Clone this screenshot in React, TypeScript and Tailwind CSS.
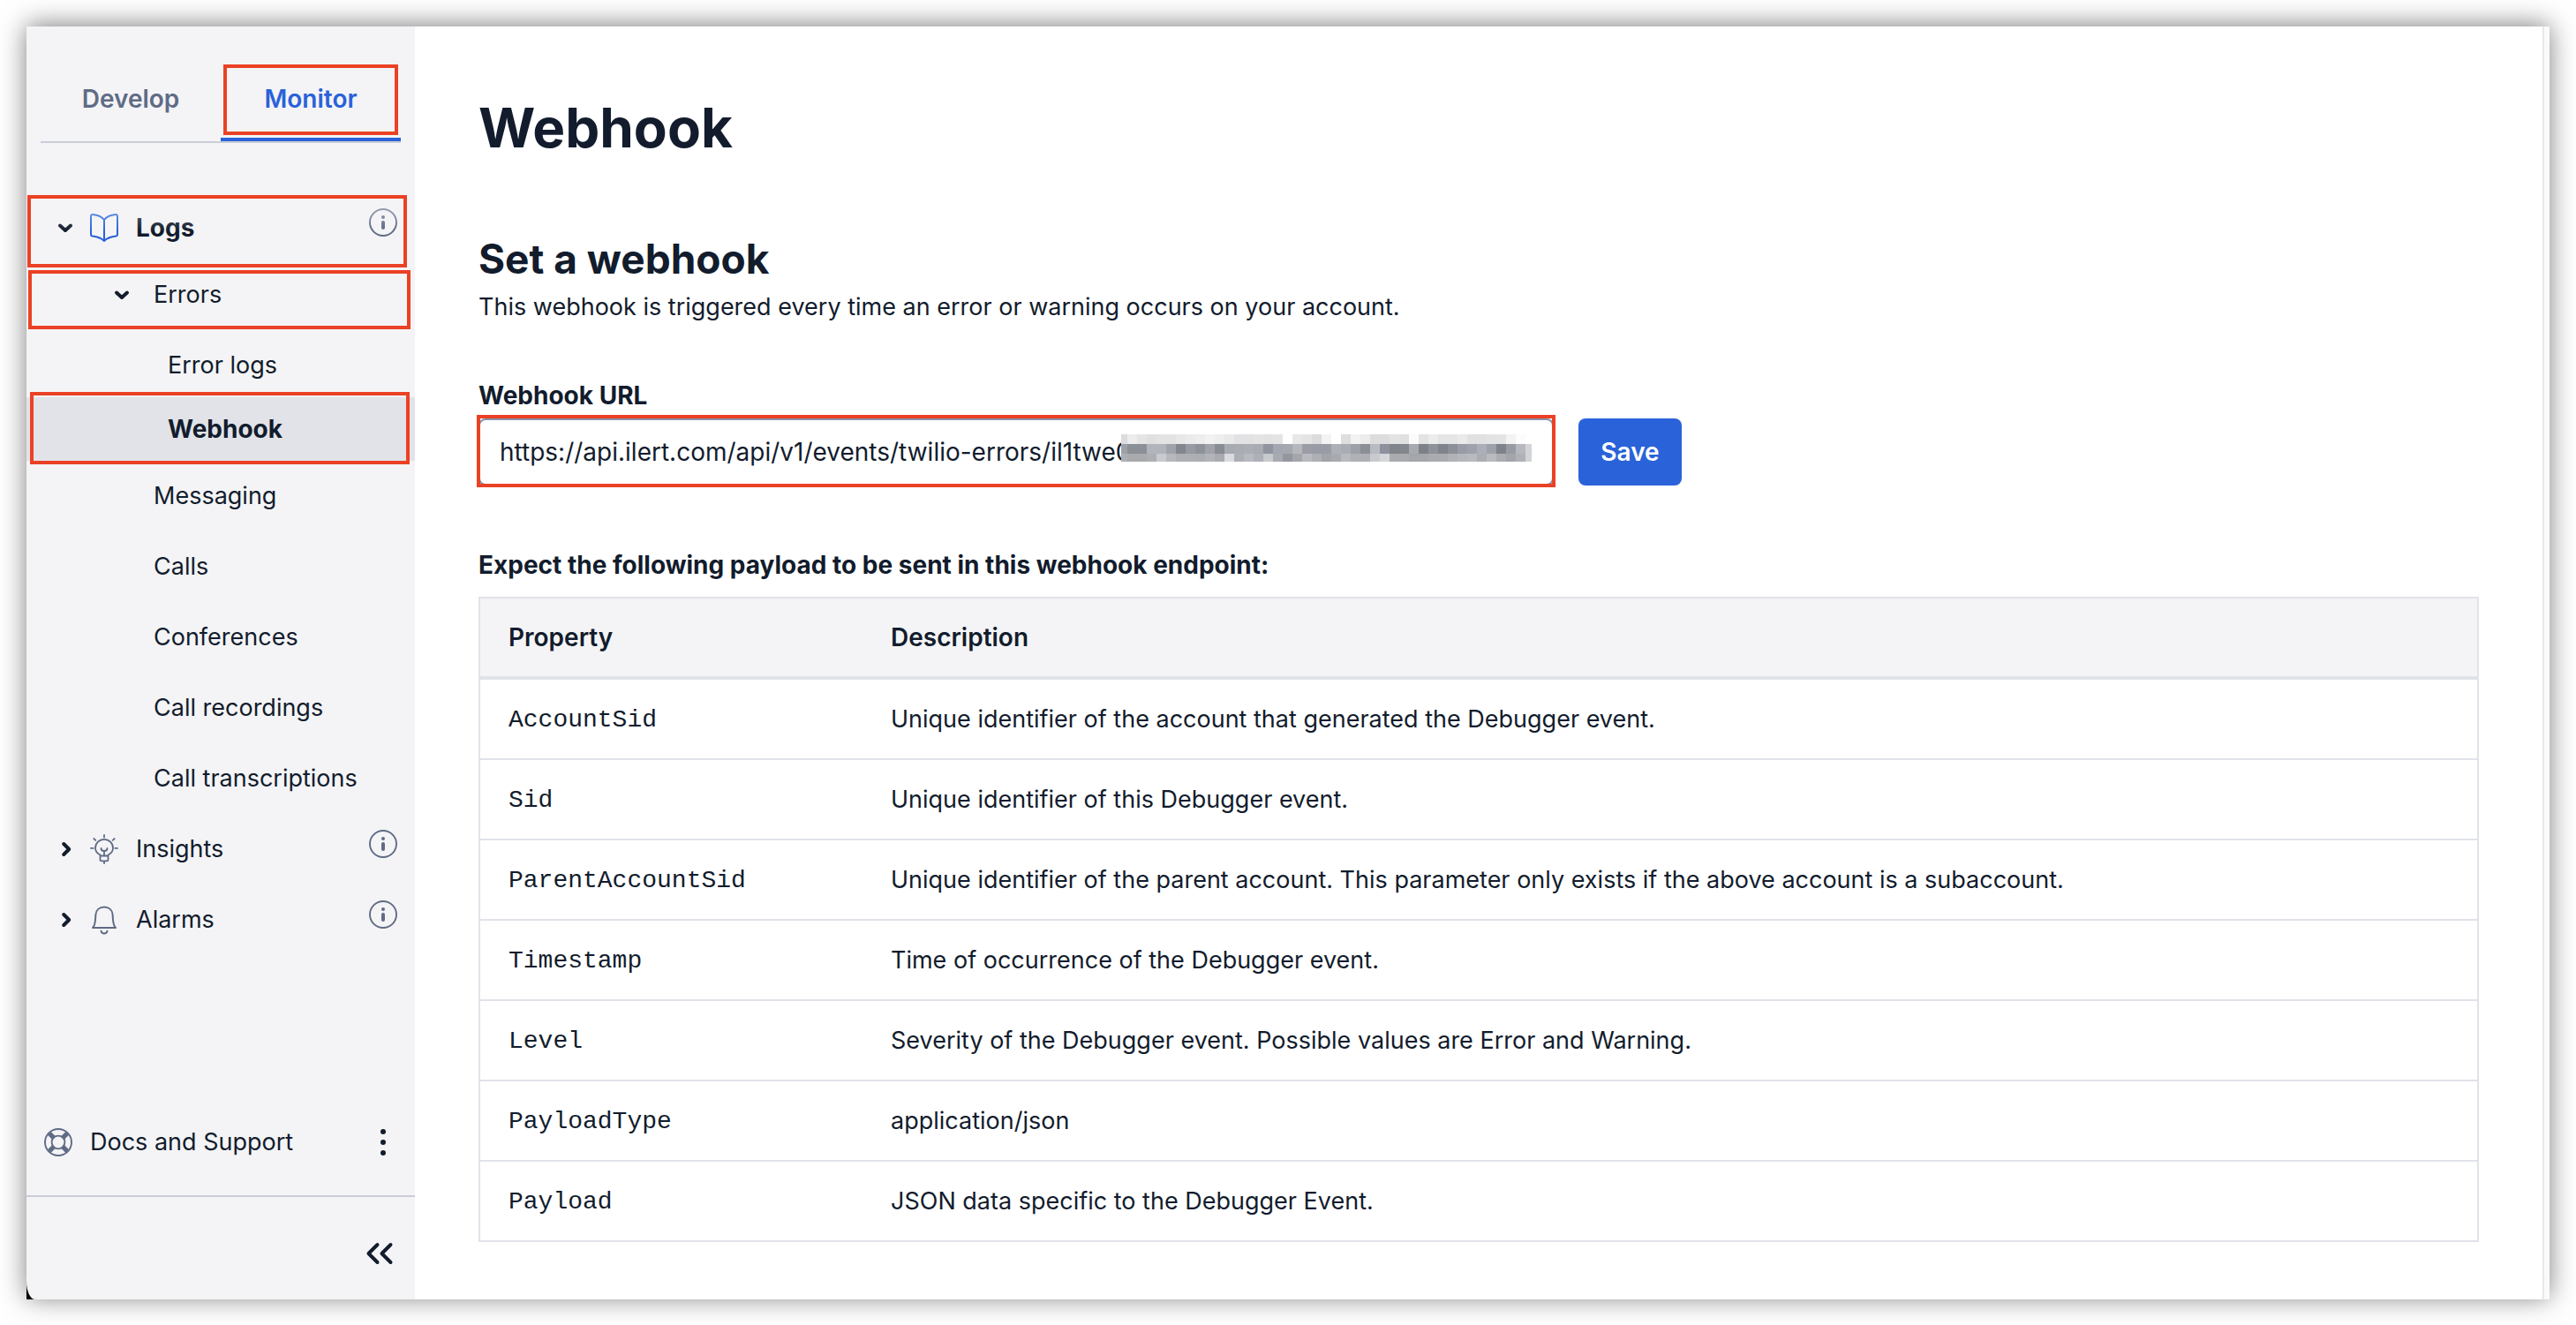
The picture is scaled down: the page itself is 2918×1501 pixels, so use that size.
import type { ReactNode } from "react";

function Highlight({ className }: { className: string }) {
  return (
    <span
      aria-hidden="true"
      className={`pointer-events-none absolute z-20 border-4 border-[#eb4125] ${className}`}
    />
  );
}

function ChevronDown() {
  return (
    <svg viewBox="0 0 24 24" className="size-6 shrink-0" fill="none" stroke="#121c2d" strokeWidth="4" strokeLinecap="round" strokeLinejoin="round" aria-hidden="true">
      <path d="M6 9.5l6 5.5 6-5.5" />
    </svg>
  );
}

function ChevronRight() {
  return (
    <svg viewBox="0 0 24 24" className="size-6 shrink-0" fill="none" stroke="#121c2d" strokeWidth="4" strokeLinecap="round" strokeLinejoin="round" aria-hidden="true">
      <path d="M10.2 6l6 6-6 6" />
    </svg>
  );
}

function BookIcon() {
  return (
    <svg viewBox="0 0 32 32" className="size-8 shrink-0" fill="none" stroke="#2a62d9" strokeWidth="2" strokeLinejoin="round" strokeLinecap="round" aria-hidden="true">
      <path d="M16 7v24M16 7C13.600 4 8.500 1.700 3 1.100A1.800 1.800 0 0 0 1 2.900V23.600A1.900 1.900 0 0 0 2.700 25.500C8 26.200 13.200 27.800 16 31C18.800 27.800 24 26.200 29.300 25.500A1.900 1.900 0 0 0 31 23.600V2.900A1.800 1.800 0 0 0 29 1.100C23.500 1.700 18.400 4 16 7Z" />
    </svg>
  );
}

function BulbIcon() {
  return (
    <svg viewBox="0 0 32 34" className="h-[34px] w-8 shrink-0" fill="none" stroke="#606b85" strokeWidth="1.8" strokeLinecap="round" strokeLinejoin="round" aria-hidden="true">
      <path d="M11.500 24.500V23.500C8.200 21.800 6 19 6 15.800a10 10 0 0 1 20 0c0 3.200-2.200 6-5.500 7.700v1M11.500 24.500h9v4.200a1.600 1.600 0 0 1-1.600 1.600h-5.800a1.600 1.600 0 0 1-1.600-1.600zM16 30.500v2.500M16 24.300V19M12.500 16c0 1.800 1.600 3 3.500 3s3.500-1.200 3.500-3" />
      <path d="M16 1v2.600M1 15.900h2.600M28.400 15.900H31M4.300 5l2 1.800M27.700 5l-2 1.800" />
    </svg>
  );
}

function BellIcon() {
  return (
    <svg viewBox="0 0 32 34" className="h-[34px] w-8 shrink-0" fill="none" stroke="#606b85" strokeWidth="2" strokeLinecap="round" strokeLinejoin="round" aria-hidden="true">
      <path d="M3 26C5 24 5.600 21.500 6 17l.4-6C6.800 6 10.500 2.500 16 2.500S25.200 6 25.600 11l.4 6c.4 4.500 1 7 3 9z" />
      <path d="M12.500 29.800c.4 1.700 1.800 2.700 3.500 2.700s3.100-1 3.500-2.700" />
    </svg>
  );
}

function InfoIcon() {
  return (
    <svg viewBox="0 0 32 32" className="size-8" aria-hidden="true">
      <circle cx="16" cy="16" r="15" fill="none" stroke="#606b85" strokeWidth="1.900" />
      <circle cx="16" cy="10" r="2" fill="#606b85" />
      <rect x="14" y="14" width="4" height="10" rx="2" fill="#606b85" />
    </svg>
  );
}

function LifebuoyIcon() {
  return (
    <svg viewBox="0 0 32 32" className="size-8 shrink-0" fill="none" stroke="#606b85" aria-hidden="true">
      <circle cx="16" cy="16" r="15" strokeWidth="1.900" />
      <circle cx="16" cy="16" r="7.400" strokeWidth="1.900" />
      <path strokeWidth="5.200" d="M5.800 5.800l5 5M26.200 5.800l-5 5M5.800 26.200l5-5M26.200 26.200l-5-5" />
    </svg>
  );
}

function InfoButton({ label }: { label: string }) {
  return (
    <button type="button" aria-label={`About ${label}`} className="mr-5 mb-3">
      <InfoIcon />
    </button>
  );
}

function SectionRow({ label, icon, open = false, children }: { label: string; icon: ReactNode; open?: boolean; children?: ReactNode }) {
  return (
    <div className="relative flex h-20 items-center justify-between pl-8">
      <button type="button" aria-expanded={open} className="flex items-center">
        {open ? <ChevronDown /> : <ChevronRight />}
        <span className="ml-4">{icon}</span>
        <span className={open ? "ml-5 text-[28px] font-bold" : "ml-5"}>{label}</span>
      </button>
      <InfoButton label={label} />
      {children}
    </div>
  );
}

const leaves = ["Messaging", "Calls", "Conferences", "Call recordings", "Call transcriptions"];

function Sidebar() {
  return (
    <div className="flex w-[440px] shrink-0 bg-black">
      <aside className="flex w-full flex-col rounded-bl-[10px_20px] bg-[#f4f4f6]">
        <div role="tablist" className="mx-4 mt-[38px] grid grid-cols-2 border-b-2 border-[#cacdd8] text-[28px] font-semibold">
          <button type="button" role="tab" aria-selected="false" className="h-[92px] border-b-4 border-transparent text-[#606b85]">
            Develop
          </button>
          <button type="button" role="tab" aria-selected="true" className="relative h-[92px] border-b-4 border-[#2a62d9] text-[#2a62d9]">
            Monitor
            <Highlight className="top-[5px] right-[3px] left-[3px] h-20" />
          </button>
        </div>

        <nav aria-label="Monitor" className="relative mt-14">
          <span aria-hidden="true" className="pointer-events-none absolute inset-x-0 top-0 z-10 h-11 bg-linear-to-b from-[#f4f4f6]/60 to-[#f4f4f6]/0" />
          <ul>
            <li>
              <SectionRow label="Logs" icon={<BookIcon />} open>
                <Highlight className="top-[3px] right-[9px] left-px h-[82px]" />
              </SectionRow>
              <ul>
                <li>
                  <div className="relative mb-2 flex h-[72px] items-center pl-24">
                    <button type="button" aria-expanded="true" className="flex items-center gap-6">
                      <ChevronDown />
                      Errors
                    </button>
                    <Highlight className="top-2 right-[5px] left-0.5 h-[67px]" />
                  </div>
                  <ul>
                    <li>
                      <a href="#error-logs" className="flex h-[72px] items-center pl-40">
                        Error logs
                      </a>
                    </li>
                    <li className="relative bg-[#e1e3e8]">
                      <a href="#webhook" aria-current="page" className="flex h-[72px] items-center pl-40 text-[28px] font-bold">
                        Webhook
                      </a>
                      <Highlight className="-top-1.5 right-1.5 left-1 h-[82px]" />
                    </li>
                  </ul>
                </li>
                {leaves.map((leaf) => (
                  <li key={leaf}>
                    <a href="#logs" className="flex h-20 items-center pl-36">
                      {leaf}
                    </a>
                  </li>
                ))}
              </ul>
            </li>
            <li>
              <SectionRow label="Insights" icon={<BulbIcon />} />
            </li>
            <li>
              <SectionRow label="Alarms" icon={<BellIcon />} />
            </li>
          </ul>
        </nav>

        <div className="mt-auto mb-5 flex h-20 items-center justify-between pr-5 pl-5">
          <a href="#docs" className="flex items-center gap-5">
            <LifebuoyIcon />
            Docs and Support
          </a>
          <button type="button" aria-label="More options">
            <svg viewBox="0 0 32 32" className="size-8" fill="#121c2d" aria-hidden="true">
              <circle cx="16" cy="4" r="3" />
              <circle cx="16" cy="16" r="3" />
              <circle cx="16" cy="28" r="3" />
            </svg>
          </button>
        </div>
        <div className="flex h-[118px] items-start justify-end border-t-2 border-[#cacdd8] pt-12 pr-6">
          <button type="button" aria-label="Collapse navigation">
            <svg viewBox="0 0 32 32" className="size-8" fill="none" stroke="#121c2d" strokeWidth="4" strokeLinecap="round" strokeLinejoin="round" aria-hidden="true">
              <path d="M13.500 6l-10 10 10 10M28.500 6l-10 10 10 10" />
            </svg>
          </button>
        </div>
      </aside>
    </div>
  );
}

const mosaic: string[][] = [
  "dcdcde ececec e5e5e5 e0e0e1 e3e3e3 e3e3e3 e8e8e8 ebebeb eeeeee f2f2f2 eeeeee e9e9e9 e2e2e4 e2e2e4 e4e4e4 e2e2e3 e4e4e4 ffffff e8e8e8 e4e4e5 dcdcde f3f3f3 ffffff dedee0 f2f2f2 ececec dddddf dddddf e3e3e3 e0e0e3 fbfbfb e3e3e3 ececec e5e5e5 e5e5e5 eaeaea e1e1e2 e1e1e2 e3e3e3 e4e4e4 f3f3f3 fdfbfd ffffff".split(" "),
  "9fa1a7 8b9097 8b9096 b1b4bb b1b4bb a0a3a9 81868f 979aa3 8d929a a1a3a9 888d93 a6aab1 a9adb3 abaeb4 a9abb1 9094a0 a3a7b1 a5a8b0 b5b7bd 9a9da5 999ca6 999ca6 adb0b6 a9acb2 9da0a9 8a8f95 b8bbc1 8f929e 80858c 82878d a8aab0 7d8289 8e929b 7f848c 8a8f98 999ca6 9fa2ac acafb7 9da1a9 7e838b 989ba3 b6b8be d3d4d8".split(" "),
  "aeafb3 a9aaae a9aaae aeafb3 c8cacf b6b8bc aeafb4 aeafb4 acadb2 b3b4ba aaabb0 dadbdf acafb5 b8babf adb0b6 c8cace a7aab0 94979e a5a6ab b8babf afb0b5 a2a4a9 a9aaaf b8babf b0b1b7 afb0b5 c8cace d5d6d9 a9abaf a9abaf a5a6ab a6a7ac a9abaf abacb1 b0b2b6 b5b7bc b8babf acadb3 b8babf acadb3 a4a5ab afb1b6 d3d4d8".split(" "),
];

function Mosaic() {
  return (
    <svg viewBox="0 0 465 31" className="pointer-events-none absolute top-[18px] right-[25px] h-[31px] w-[465px]" shapeRendering="crispEdges" aria-hidden="true">
      {mosaic.map((row, r) =>
        row.map((fill, c) => (
          <rect key={`${r}-${c}`} x={c === 0 ? 0 : 7 + (c - 1) * 11} y={r * 11} width={c === 0 ? 7 : 11} height={11} fill={`#${fill}`} />
        )),
      )}
    </svg>
  );
}

const properties = [
  ["AccountSid", "Unique identifier of the account that generated the Debugger event."],
  ["Sid", "Unique identifier of this Debugger event."],
  ["ParentAccountSid", "Unique identifier of the parent account. This parameter only exists if the above account is a subaccount."],
  ["Timestamp", "Time of occurrence of the Debugger event."],
  ["Level", "Severity of the Debugger event. Possible values are Error and Warning."],
  ["PayloadType", "application/json"],
  ["Payload", "JSON data specific to the Debugger Event."],
];

export default function App() {
  return (
    <div className="flex min-h-screen bg-white px-[30px] pt-[30px] pb-[29px] font-['Inter',sans-serif] text-[27px] leading-10 text-[#121c2d]">
      <div className="flex flex-1 shadow-[0_-2px_28px_rgba(0,0,0,0.5)]">
        <Sidebar />
        <main className="min-w-0 flex-1 bg-white px-[72px] pt-[75px] pb-16">
          <h1 className="text-[62px] leading-[80px] font-bold">Webhook</h1>
          <h2 className="mt-20 text-[46px] leading-[56px] font-bold">Set a webhook</h2>
          <p className="mt-[7px]">This webhook is triggered every time an error or warning occurs on your account.</p>

          <form className="mt-[60px] text-[28px]" onSubmit={(e) => e.preventDefault()}>
            <label htmlFor="webhook-url" className="block font-bold">
              Webhook URL
            </label>
            <div className="mt-1.5 flex gap-7">
              <div className="relative w-[1218px]">
                <input
                  id="webhook-url"
                  type="text"
                  defaultValue="https://api.ilert.com/api/v1/events/twilio-errors/il1twe0"
                  className="h-[76px] w-full rounded-lg border-2 border-[#8891aa] bg-white px-[22px] outline-none"
                />
                <Mosaic />
                <Highlight className="-inset-x-0.5 -top-1 h-[82px]" />
              </div>
              <button type="submit" className="h-[76px] w-[117px] rounded-lg bg-[#2a62d9] font-semibold text-white">
                Save
              </button>
            </div>
          </form>

          <h3 className="mt-[70px] text-[28px] font-bold">Expect the following payload to be sent in this webhook endpoint:</h3>
          <table className="mt-4 w-full border-separate border-spacing-0 border-x-2 border-t-2 border-[#e1e3ea] text-left">
            <thead className="text-[28px]">
              <tr className="h-[92px] bg-[#f4f4f6]">
                <th scope="col" className="w-[433px] border-b-4 border-[#e1e3ea] px-8 font-semibold">Property</th>
                <th scope="col" className="border-b-4 border-[#e1e3ea] px-8 font-semibold">Description</th>
              </tr>
            </thead>
            <tbody>
              {properties.map(([name, description]) => (
                <tr key={name} className="h-[91px]">
                  <td className="border-b-2 border-[#e1e3ea] px-8 text-[28px]">
                    <code className="font-['Courier_New','Liberation_Mono',monospace]">{name}</code>
                  </td>
                  <td className="border-b-2 border-[#e1e3ea] px-8">{description}</td>
                </tr>
              ))}
            </tbody>
          </table>
        </main>
        <div className="w-2 shrink-0 border-l-2 border-[#e8e8e8] bg-[#fafafa]" />
      </div>
    </div>
  );
}
